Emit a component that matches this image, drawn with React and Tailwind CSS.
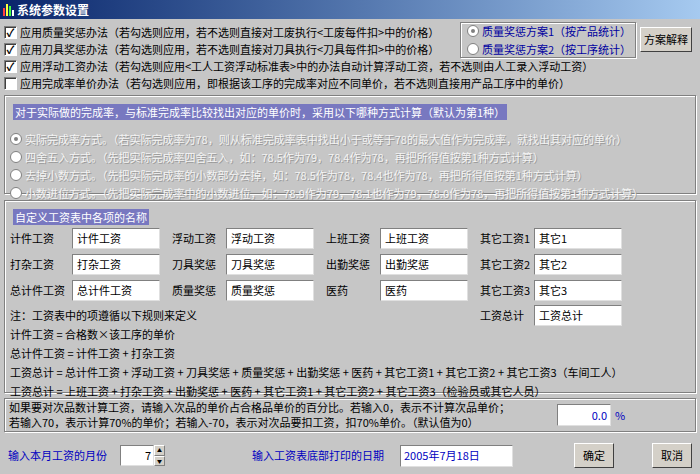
const F = { fontFamily: '"Noto Sans CJK SC", "Liberation Sans", sans-serif' };

const Check = ({ on, text }) => (
  <div className="flex items-center h-[17px] gap-[3px]">
    <div className="w-[13px] h-[13px] bg-white border border-t-[#808080] border-l-[#808080] border-b-white border-r-white shadow-[inset_1px_1px_0_#404040] flex items-center justify-center text-[11px] leading-none font-bold text-black">
      {on ? "✓" : ""}
    </div>
    <span className="text-[11px] leading-[17px] text-black whitespace-nowrap">{text}</span>
  </div>
);

const Radio = ({ on, text, dim }) => (
  <div className="flex items-center h-[18px] gap-[3px]">
    <div className="w-[12px] h-[12px] shrink-0 rounded-full bg-white border border-[#808080] flex items-center justify-center">
      {on && <div className="w-[4px] h-[4px] rounded-full bg-[#808080]" />}
    </div>
    <span className={`text-[11px] leading-[18px] whitespace-nowrap ${dim ? "text-[#f4f4f4] [text-shadow:1px_1px_0_#9a9a9a]" : "text-[#0000a0]"}`}>{text}</span>
  </div>
);

const Field = ({ label, value, lw }) => (
  <div className="flex items-center">
    <span className={`text-[11px] leading-[21px] whitespace-nowrap text-black ${lw}`}>{label}</span>
    <div className="w-[88px] h-[21px] bg-white border border-t-[#808080] border-l-[#808080] border-b-[#e0e0e0] border-r-[#e0e0e0] px-[4px] text-[11px] leading-[19px] text-black whitespace-nowrap">{value}</div>
  </div>
);

const Btn = ({ children, w }) => (
  <div className={`${w} h-[25px] bg-[#d4d0c8] border border-t-white border-l-white border-b-[#404040] border-r-[#404040] flex items-center justify-center text-[11px] leading-none text-black`}>{children}</div>
);

const Box = "border border-[#808080] shadow-[inset_1px_1px_0_white,1px_1px_0_white]";

export default function App() {
  return (
    <div style={F} className="relative w-[700px] h-[474px] bg-[#c6c6c6] flex flex-col overflow-hidden">
      <div className="h-[19px] shrink-0 bg-gradient-to-r from-[#0a246a] to-[#a6caf0] flex items-center px-[3px] gap-[3px]">
        <div className="flex items-end gap-[1px] h-[12px]">
          <div className="w-[2px] h-[8px] bg-[#ff4040]" /><div className="w-[2px] h-[12px] bg-[#ffff40]" /><div className="w-[2px] h-[10px] bg-[#40ff40]" /><div className="w-[2px] h-[6px] bg-white" />
        </div>
        <span className="text-white text-[12px] leading-none font-bold">系统参数设置</span>
      </div>
      <div className="flex flex-col px-[4px] pt-[5px] h-[72px] shrink-0">
        <Check on text="应用质量奖惩办法（若勾选则应用，若不选则直接对工废执行<工废每件扣>中的价格）" />
        <Check on text="应用刀具奖惩办法（若勾选则应用，若不选则直接对刀具执行<刀具每件扣>中的价格）" />
        <Check on text="应用浮动工资办法（若勾选则应用<工人工资浮动标准表>中的办法自动计算浮动工资，若不选则由人工录入浮动工资）" />
        <Check text="应用完成率单价办法（若勾选则应用，即根据该工序的完成率对应不同单价，若不选则直接用产品工序中的单价）" />
      </div>
      <div className={`absolute left-[460px] top-[22px] w-[176px] h-[36px] ${Box} bg-[#c6c6c6] px-[6px] flex flex-col justify-center`}>
        <Radio on text="质量奖惩方案1（按产品统计）" />
        <Radio text="质量奖惩方案2（按工序统计）" />
      </div>
      <div className="absolute left-[640px] top-[27px]"><Btn w="w-[52px]">方案解释</Btn></div>

      <div className={`mx-[4px] mt-[4px] h-[99px] shrink-0 ${Box} px-[5px] pt-[2px]`}>
        <div className="inline-block bg-[#7878c0] text-white text-[11px] leading-[16px] px-[2px] ml-[3px]">对于实际做的完成率，与标准完成率比较找出对应的单价时，采用以下哪种方式计算（默认为第1种）</div>
        <div className="mt-[8px] flex flex-col">
          <Radio dim on text="实际完成率方式。（若实际完成率为78，则从标准完成率表中找出小于或等于78的最大值作为完成率，就找出其对应的单价）" />
          <Radio dim text="四舍五入方式。（先把实际完成率四舍五入，如：78.5作为79，78.4作为78，再把所得值按第1种方式计算）" />
          <Radio dim text="去掉小数方式。（先把实际完成率的小数部分去掉，如：78.5作为78，78.4也作为78，再把所得值按第1种方式计算）" />
          <Radio dim text="小数进位方式。（先把实际完成率中的小数进位，如：78.9作为79，78.1也作为79，78.0作为78，再把所得值按第1种方式计算）" />
        </div>
      </div>

      <div className={`mx-[4px] mt-[6px] h-[193px] shrink-0 ${Box} px-[5px] pt-[2px]`}>
        <div className="inline-block bg-[#7878c0] text-white text-[11px] leading-[16px] px-[2px] ml-[3px]">自定义工资表中各项的名称</div>
        <div className="grid grid-cols-[162px_154px_154px_auto] gap-y-[5px] mt-[1px]">
          <Field lw="w-[62px]" label="计件工资" value="计件工资" />
          <Field lw="w-[54px]" label="浮动工资" value="浮动工资" />
          <Field lw="w-[54px]" label="上班工资" value="上班工资" />
          <Field lw="w-[54px]" label="其它工资1" value="其它1" />
          <Field lw="w-[62px]" label="打杂工资" value="打杂工资" />
          <Field lw="w-[54px]" label="刀具奖惩" value="刀具奖惩" />
          <Field lw="w-[54px]" label="出勤奖惩" value="出勤奖惩" />
          <Field lw="w-[54px]" label="其它工资2" value="其它2" />
          <Field lw="w-[62px]" label="总计件工资" value="总计件工资" />
          <Field lw="w-[54px]" label="质量奖惩" value="质量奖惩" />
          <Field lw="w-[54px]" label="医药" value="医药" />
          <Field lw="w-[54px]" label="其它工资3" value="其它3" />
        </div>
        <div className="flex items-start mt-[4px]">
          <div className="flex flex-col text-[11px] text-black leading-[19px] w-[470px] pt-[1px]">
            <span>注：工资表中的项遵循以下规则来定义</span>
            <span>计件工资 = 合格数×该工序的单价</span>
            <span>总计件工资 = 计件工资 + 打杂工资</span>
          </div>
          <Field lw="w-[54px]" label="工资总计" value="工资总计" />
        </div>
        <div className="flex flex-col text-[11px] text-black leading-[19px] whitespace-nowrap">
          <span>工资总计 = 总计件工资 + 浮动工资 + 刀具奖惩 + 质量奖惩 + 出勤奖惩 + 医药 + 其它工资1 + 其它工资2 + 其它工资3（车间工人）</span>
          <span>工资总计 = 上班工资 + 打杂工资 + 出勤奖惩 + 医药 + 其它工资1 + 其它工资2 + 其它工资3（检验员或其它人员）</span>
        </div>
      </div>

      <div className={`mx-[4px] mt-[5px] h-[34px] shrink-0 ${Box} px-[4px] flex items-center`}>
        <div className="flex flex-col text-[11px] text-black leading-[15px] w-[548px] whitespace-nowrap">
          <span>如果要对次品数计算工资，请输入次品的单价占合格品单价的百分比。若输入0，表示不计算次品单价；</span>
          <span>若输入70，表示计算70%的单价；若输入-70，表示对次品要扣工资，扣70%单价。（默认值为0）</span>
        </div>
        <div className="w-[54px] h-[22px] bg-white border border-t-[#808080] border-l-[#808080] border-b-[#e0e0e0] border-r-[#e0e0e0] text-right pr-[3px] text-[11px] leading-[20px] text-[#0000c0]">0.0</div>
        <span className="ml-[4px] text-[11px] leading-none text-[#0000c0]">%</span>
      </div>

      <div className="flex items-center px-[8px] mt-[11px]">
        <span className="text-[11px] leading-none text-[#0000c0] w-[112px]">输入本月工资的月份</span>
        <div className="w-[34px] h-[21px] bg-white border border-t-[#808080] border-l-[#808080] border-b-[#e0e0e0] border-r-[#e0e0e0] text-right pr-[2px] text-[11px] leading-[19px]">7</div>
        <div className="flex flex-col h-[21px] w-[11px]">
          <div className="flex-1 bg-[#d4d0c8] border border-t-white border-l-white border-b-[#808080] border-r-[#808080] text-[5px] leading-[8px] text-center">▲</div>
          <div className="flex-1 bg-[#d4d0c8] border border-t-white border-l-white border-b-[#808080] border-r-[#808080] text-[5px] leading-[8px] text-center">▼</div>
        </div>
        <span className="ml-[87px] text-[11px] leading-none text-[#0000c0] w-[148px]">输入工资表底部打印的日期</span>
        <div className="w-[113px] h-[22px] bg-white border border-t-[#808080] border-l-[#808080] border-b-[#e0e0e0] border-r-[#e0e0e0] pl-[3px] text-[11px] leading-[18px] text-[#0000c0]">2005年7月18日</div>
        <div className="ml-[61px]"><Btn w="w-[40px]">确定</Btn></div>
        <div className="ml-[38px]"><Btn w="w-[40px]">取消</Btn></div>
      </div>
    </div>
  );
}
